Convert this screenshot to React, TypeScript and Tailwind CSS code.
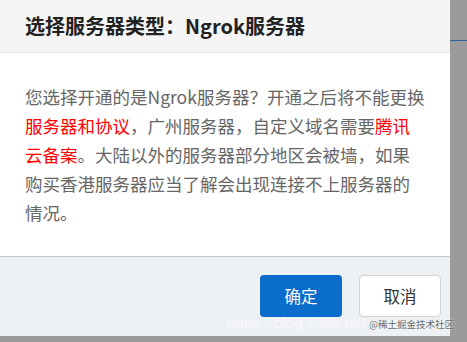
export default function App() {
  const font = { fontFamily: '"Microsoft YaHei", "Noto Sans CJK SC", "Noto Sans", sans-serif' };
  return (
    <div className="relative w-[467px] h-[342px] bg-[#9b9b9b] overflow-hidden" style={font}>
      <div className="flex">
        <div className="w-[450px] flex flex-col bg-white">
          <div className="h-[53px] bg-[#f5f5f6] border-b border-[#e6e6e6] px-[25px] flex items-center">
            <span className="text-[20px] font-bold text-[#222] leading-none">选择服务器类型：Ngrok服务器</span>
          </div>
          <div className="px-[25px] py-[29px] text-[17.5px] leading-[29px] text-[#666] whitespace-nowrap">
            <div>您选择开通的是Ngrok服务器？开通之后将不能更换</div>
            <div>
              <span className="text-[#f00]">服务器和协议</span>，广州服务器，自定义域名需要<span className="text-[#f00]">腾讯</span>
            </div>
            <div>
              <span className="text-[#f00]">云备案</span>。大陆以外的服务器部分地区会被墙，如果
            </div>
            <div>购买香港服务器应当了解会出现连接不上服务器的</div>
            <div>情况。</div>
          </div>
          <div className="h-[80px] bg-[#eef1f4] border-t border-[#c9c9c9] flex justify-end items-start pt-[18px] pr-[9px] gap-[17px]">
            <button className="w-[82px] h-[42px] rounded-[4px] bg-[#0a6ccb] text-white text-[16.5px]">确定</button>
            <button className="w-[82px] h-[42px] rounded-[4px] bg-white border border-[#cfd3d8] text-[#333] text-[16.5px]">取消</button>
          </div>
        </div>
        <div className="flex-1 pt-[40px]">
          <div className="h-[1px] bg-[#2f6398]"></div>
        </div>
      </div>
      <div className="absolute left-[227px] top-[315px] text-[15.5px] text-white/50 leading-none" style={{ fontFamily: '"Liberation Sans", sans-serif' }}>
        https://blog.csdn.net
      </div>
      <div className="absolute left-[369px] top-[320px] text-[9.5px] text-[#666] leading-none" style={{ textShadow: '0 0 2px #fff' }}>
        @稀土掘金技术社区
      </div>
    </div>
  );
}
